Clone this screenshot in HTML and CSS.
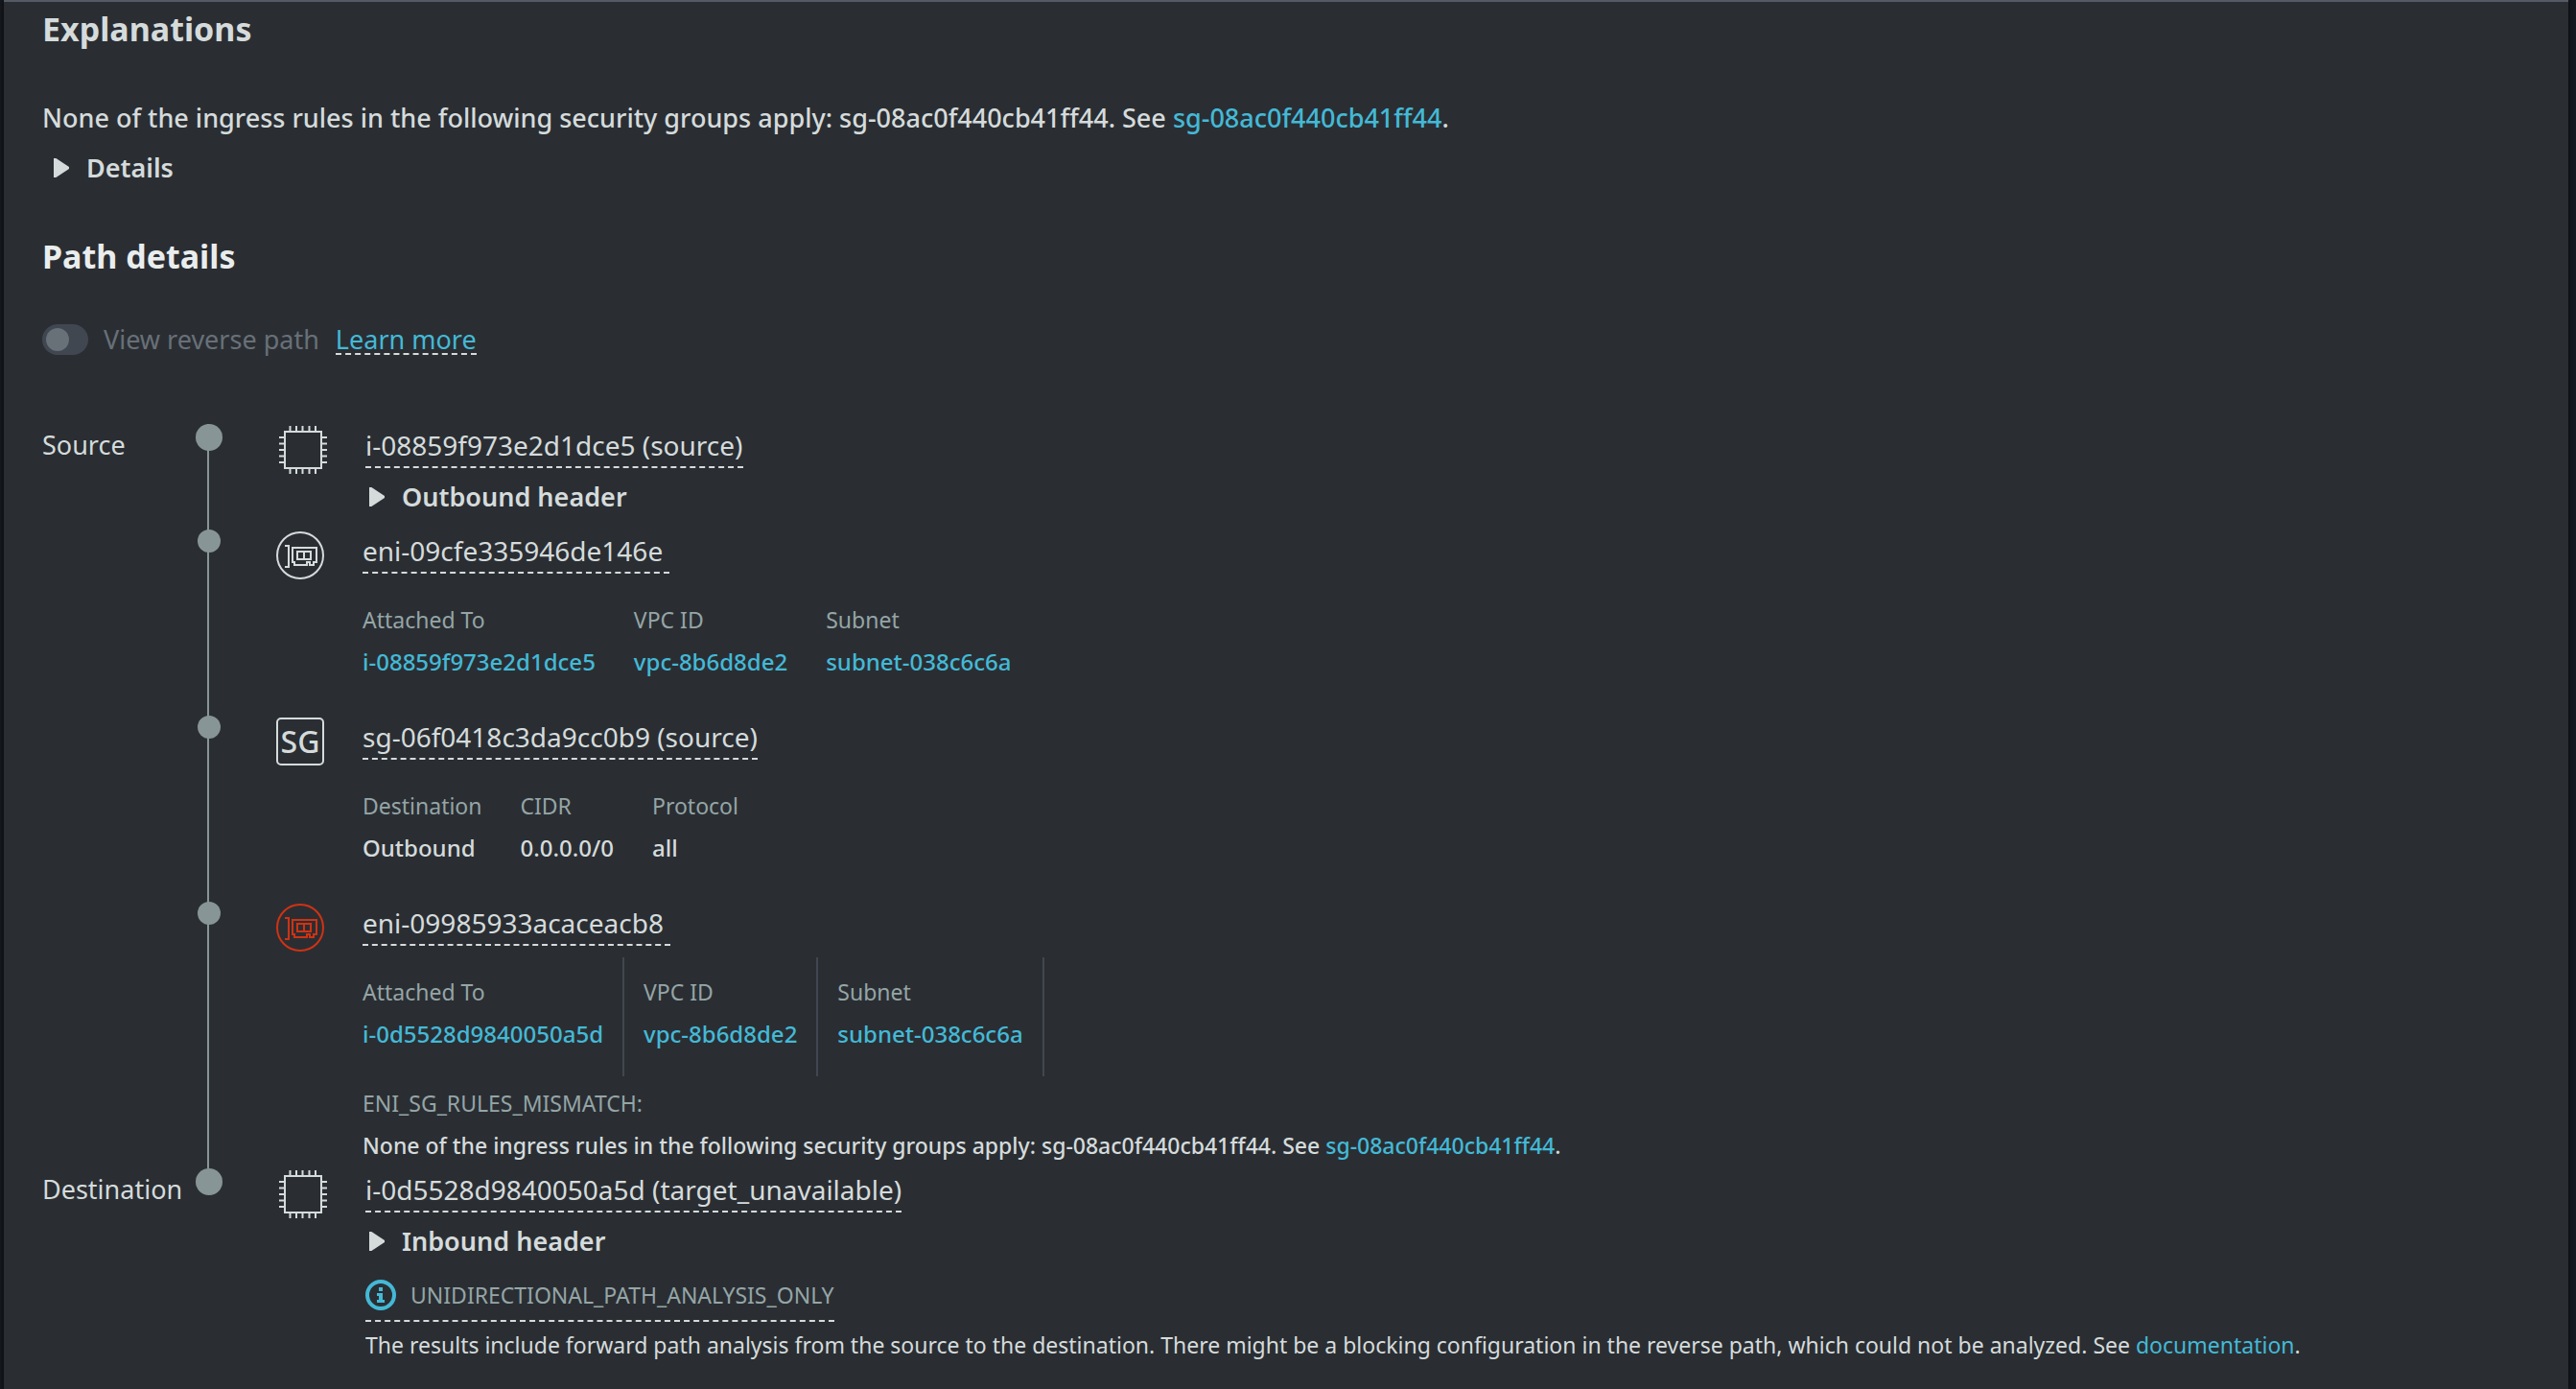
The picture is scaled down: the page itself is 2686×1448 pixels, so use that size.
FILE: index.html
```html
<!DOCTYPE html>
<html lang="en">
<head>
<meta charset="utf-8">
<title>Path analysis</title>
<link rel="stylesheet" href="styles.css">
</head>
<body>
<svg class="sprite" aria-hidden="true">
  <symbol id="chip" viewBox="0 0 50 50">
    <rect x="6" y="6" width="38" height="38" fill="none" stroke="currentColor" stroke-width="2"/>
    <path d="M11.500 0v5M18 0v5M24.500 0v5M31.500 0v5M38 0v5M11.500 45v5M18 45v5M24.500 45v5M31.500 45v5M38 45v5M0 12h5M0 18.500h5M0 25h5M0 31.500h5M0 38h5M45 12h5M45 18.500h5M45 25h5M45 31.500h5M45 38h5" fill="none" stroke="currentColor" stroke-width="2"/>
  </symbol>
  <symbol id="eni" viewBox="0 0 50 50">
    <g fill="none" stroke="currentColor" stroke-width="2">
      <circle cx="25" cy="25" r="24"/>
      <path d="M9 15h4v22h-4M17 17h25v15h-3v3h-4v-3h-3v3h-13v-3h-2zM22 21h14v8h-14zM29 21v8"/>
    </g>
  </symbol>
</svg>
<main class="panel">
  <section class="explanations">
    <h3 class="heading">Explanations</h3>
    <p class="message">None of the ingress rules in the following security groups apply: sg-08ac0f440cb41ff44. See <a href="#sg">sg-08ac0f440cb41ff44</a>.</p>
    <details class="expander"><summary>Details</summary></details>
  </section>
  <section class="path">
    <h2 class="heading heading-bright">Path details</h2>
    <div class="toggle-row">
      <input class="toggle" type="checkbox" id="reverse" disabled>
      <label for="reverse">View reverse path</label>
      <a class="learn" href="#learn">Learn more</a>
    </div>
    <ol class="hops">
      <li class="hop hop-end">
        <span class="role">Source</span>
        <span class="rail"><span class="dot dot-large"></span></span>
        <svg class="icon"><use href="#chip"/></svg>
        <div class="body">
          <span class="name">i-08859f973e2d1dce5 (source)</span>
          <details class="expander"><summary>Outbound header</summary></details>
        </div>
      </li>
      <li class="hop">
        <span class="role"></span>
        <span class="rail"><span class="dot"></span></span>
        <svg class="icon"><use href="#eni"/></svg>
        <div class="body">
          <span class="name name-padded">eni-09cfe335946de146e</span>
          <dl class="facts">
            <div><dt>Attached To</dt><dd><a href="#i">i-08859f973e2d1dce5</a></dd></div>
            <div><dt>VPC ID</dt><dd><a href="#vpc">vpc-8b6d8de2</a></dd></div>
            <div><dt>Subnet</dt><dd><a href="#subnet">subnet-038c6c6a</a></dd></div>
          </dl>
        </div>
      </li>
      <li class="hop">
        <span class="role"></span>
        <span class="rail"><span class="dot"></span></span>
        <span class="icon sg">SG</span>
        <div class="body">
          <span class="name">sg-06f0418c3da9cc0b9 (source)</span>
          <dl class="facts">
            <div><dt>Destination</dt><dd>Outbound</dd></div>
            <div><dt>CIDR</dt><dd>0.0.0.0/0</dd></div>
            <div><dt>Protocol</dt><dd>all</dd></div>
          </dl>
        </div>
      </li>
      <li class="hop">
        <span class="role"></span>
        <span class="rail"><span class="dot"></span></span>
        <svg class="icon icon-error"><use href="#eni"/></svg>
        <div class="body">
          <span class="name name-padded">eni-09985933acaceacb8</span>
          <dl class="facts facts-ruled">
            <div><dt>Attached To</dt><dd><a href="#i2">i-0d5528d9840050a5d</a></dd></div>
            <div><dt>VPC ID</dt><dd><a href="#vpc2">vpc-8b6d8de2</a></dd></div>
            <div><dt>Subnet</dt><dd><a href="#subnet2">subnet-038c6c6a</a></dd></div>
          </dl>
          <p class="small code">ENI_SG_RULES_MISMATCH:</p>
          <p class="small">None of the ingress rules in the following security groups apply: sg-08ac0f440cb41ff44. See <a href="#sg">sg-08ac0f440cb41ff44</a>.</p>
        </div>
      </li>
      <li class="hop hop-end">
        <span class="role">Destination</span>
        <span class="rail"><span class="dot dot-large"></span></span>
        <svg class="icon"><use href="#chip"/></svg>
        <div class="body">
          <span class="name">i-0d5528d9840050a5d (target_unavailable)</span>
          <details class="expander"><summary>Inbound header</summary></details>
          <div class="notice small code">
            <svg class="info" viewBox="0 0 32 32" aria-hidden="true"><circle cx="16" cy="16" r="14" fill="none" stroke="currentColor" stroke-width="4"/><path d="M14 8h4v4h-4zM12 14h6v7h2v3h-8v-3h2v-4h-2z" fill="currentColor"/></svg>
            <span>UNIDIRECTIONAL_PATH_ANALYSIS_ONLY</span>
          </div>
          <p class="small result">The results include forward path analysis from the source to the destination. There might be a blocking configuration in the reverse path, which could not be analyzed. See <a href="#docs">documentation</a>.</p>
        </div>
      </li>
    </ol>
  </section>
</main>
</body>
</html>
```
FILE: styles.css
```css
* { box-sizing: border-box; }

body {
  margin: 0;
  background: #16191f;
  color: #d5dbdb;
  font: 27px/44px "Noto Sans", "Open Sans", sans-serif;
}

a { color: #44b9d6; text-decoration: none; }
p, h2, h3, dl, dd, ol { margin: 0; padding: 0; }
.sprite { position: absolute; width: 0; height: 0; }

.panel {
  min-height: 100vh;
  margin: 0 8px 0 4px;
  padding: 6px 40px 0;
  background: #2a2e33;
  border-top: 2px solid #545b64;
  box-shadow: 0 0 4px 1px #0b0d11;
}

.heading { font-size: 34px; font-weight: 700; }
.heading-bright { color: #eaeded; }
.message { margin: 49px 0 8px; font-weight: 500; }
.path { margin-top: 48px; }

.expander summary {
  display: flex;
  align-items: center;
  gap: 18px;
  padding-left: 12px;
  font-weight: 600;
  list-style: none;
}
.expander summary::before {
  content: "";
  width: 16px;
  height: 20px;
  background: #d5dbdb;
  clip-path: polygon(0 0, 15% 0, 100% 45%, 100% 55%, 15% 100%, 0 100%);
}

.toggle-row {
  display: flex;
  align-items: baseline;
  height: 44px;
  margin-top: 43px;
  color: #687078;
}
.toggle {
  appearance: none;
  align-self: center;
  width: 48px;
  height: 32px;
  margin: 0 16px 0 0;
  padding: 4px;
  border-radius: 16px;
  background: #414750;
}
.toggle::before {
  content: "";
  display: block;
  width: 24px;
  height: 24px;
  border-radius: 50%;
  background: #687078;
}
.learn {
  margin-left: 17px;
  line-height: 28px;
  border-bottom: 2px dashed #d5dbdb;
}

.hops { margin-top: 66px; list-style: none; }
.hop {
  display: grid;
  grid-template-columns: 160px 28px 50px 1fr;
}
.rail { position: relative; display: flex; justify-content: center; align-items: flex-start; }
.hop:not(:last-child) .rail::before {
  content: "";
  position: absolute;
  top: 0;
  bottom: 0;
  left: 12px;
  width: 2px;
  background: #879596;
}
.dot {
  position: relative;
  width: 24px;
  height: 24px;
  border-radius: 50%;
  background: #879596;
}
.dot-large { width: 28px; height: 28px; }
.icon { width: 50px; height: 50px; margin-top: 2px; }
.hop > .icon { margin-left: 56px; }
.hop-end > .icon { margin-left: 59px; }
.icon-error { color: #d13212; }
.sg {
  border: 2px solid #d5dbdb;
  border-radius: 5px;
  font-size: 32px;
  font-weight: 500;
  line-height: 46px;
  text-align: center;
}
.body { padding: 0 0 12px 96px; }
.hop-end .body { padding-left: 99px; }
.hop:last-child .body { padding-bottom: 0; }
.name {
  display: table;
  border-bottom: 2px dashed #d5dbdb;
  font-size: 28px;
}
.name-padded { padding-right: 7px; }
.body .expander { margin-top: 8px; }
.body .expander summary { padding-left: 4px; }

.facts {
  display: flex;
  gap: 40px;
  margin: 26px 0 22px;
  font-size: 23px;
}
.facts dt, .code { color: #95a5a6; }
.facts dd { font-size: 24px; font-weight: 500; }
.facts-ruled { gap: 0; margin: 12px 0 6px; }
.facts-ruled div {
  padding: 14px 20px 22px;
  border-right: 2px solid #414750;
}
.facts-ruled div:first-child { padding-left: 0; }
.hop:nth-child(4) .body { padding-bottom: 2px; }

.small { font-size: 23px; font-weight: 500; }
.code { font-weight: 400; }
.result { font-weight: 450; }
.notice {
  display: flex;
  align-items: center;
  gap: 15px;
  width: max-content;
  margin: 12px 0 2px;
  padding-bottom: 4px;
  border-bottom: 2px dashed #d5dbdb;
}
.notice.code { font-weight: 450; }
.info { width: 32px; height: 32px; color: #44b9d6; }
```
